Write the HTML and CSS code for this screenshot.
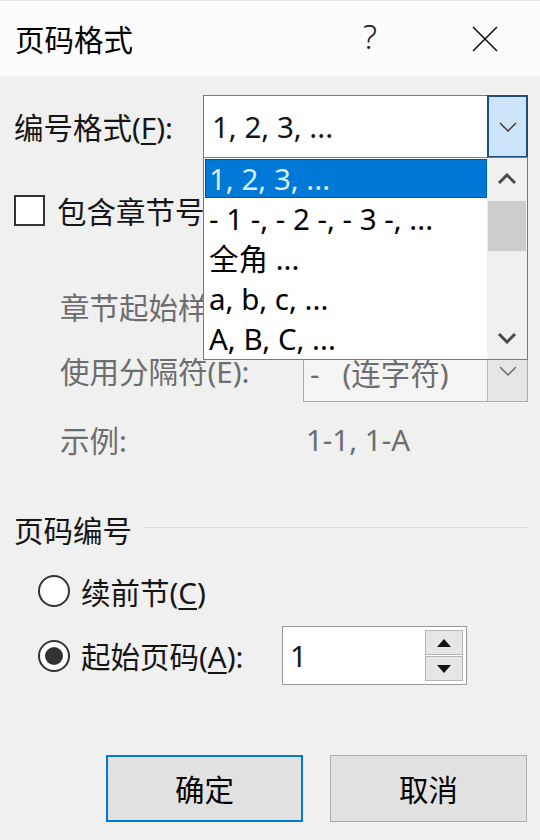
FILE: index.html
```html
<!DOCTYPE html>
<html lang="zh-CN">
<head>
    <meta charset="UTF-8">
    <title>页码格式</title>
    <link rel="stylesheet" href="styles.css">
</head>
<body>
<div class="dialog">
    <!-- TITLE BAR -->
    <div class="titlebar">
        <span class="title">页码格式</span>
        <span class="help">?</span>
        <span class="close">
            <svg width="26" height="26" viewBox="0 0 26 26"><path d="M1 1L25 25M25 1L1 25" stroke="#111" stroke-width="1.6" fill="none"/></svg>
        </span>
    </div>

    <div class="content">
        <!-- NUMBER FORMAT -->
        <div class="row fmt-row">
            <span class="fmt-label">编号格式(<u>F</u>):</span>
            <div class="combo">
                <span class="combo-text">1, 2, 3, ...</span>
                <span class="combo-btn">
                    <svg width="18" height="10" viewBox="0 0 18 10"><path d="M1 1L9 9L17 1" stroke="#333" stroke-width="1.4" fill="none"/></svg>
                </span>
                <div class="dropdown">
                    <ul class="options">
                        <li class="selected">1, 2, 3, ...</li>
                        <li>- 1 -, - 2 -, - 3 -, ...</li>
                        <li>全角 ...</li>
                        <li>a, b, c, ...</li>
                        <li>A, B, C, ...</li>
                    </ul>
                    <div class="scrollbar">
                        <span class="sb-arrow">
                            <svg width="20" height="12" viewBox="0 0 20 12"><path d="M2 10L10 2L18 10" stroke="#4a4a4a" stroke-width="3" fill="none"/></svg>
                        </span>
                        <span class="sb-track"><span class="sb-thumb"></span></span>
                        <span class="sb-arrow">
                            <svg width="20" height="12" viewBox="0 0 20 12"><path d="M2 2L10 10L18 2" stroke="#4a4a4a" stroke-width="3" fill="none"/></svg>
                        </span>
                    </div>
                </div>
            </div>
        </div>

        <!-- CHAPTER -->
        <div class="row check-row">
            <span class="checkbox"></span>
            <span class="clip-label check-label">包含章节号(<u>N</u>)</span>
        </div>
        <div class="row sub-row chapter-row">
            <span class="clip-label chapter-label disabled">章节起始样式(<u>P</u>):</span>
        </div>
        <div class="row sub-row sep-row">
            <span class="sub-label disabled">使用分隔符(E):</span>
            <div class="combo combo-disabled">
                <span class="combo-text">-&nbsp;&nbsp;&nbsp;(连字符)</span>
                <span class="combo-btn">
                    <svg width="18" height="10" viewBox="0 0 18 10"><path d="M1 1L9 9L17 1" stroke="#666" stroke-width="1.4" fill="none"/></svg>
                </span>
            </div>
        </div>
        <div class="row sub-row example-row">
            <span class="sub-label disabled">示例:</span>
            <span class="example-value disabled">1-1, 1-A</span>
        </div>

        <!-- PAGE NUMBERING -->
        <div class="row section-row">
            <span>页码编号</span>
        </div>
        <div class="row radio-row radio-first">
            <span class="radio"></span>
            <span>续前节(<u>C</u>)</span>
        </div>
        <div class="row radio-row radio-second">
            <span class="radio checked"></span>
            <span class="start-label">起始页码(<u>A</u>):</span>
            <div class="spin-input">
                <span class="spin-text">1</span>
                <span class="spin-btns">
                    <span class="spin-btn"><svg width="16" height="8" viewBox="0 0 16 8"><path d="M1 8L8 0L15 8Z" fill="#111"/></svg></span>
                    <span class="spin-btn"><svg width="16" height="8" viewBox="0 0 16 8"><path d="M1 0L8 8L15 0Z" fill="#111"/></svg></span>
                </span>
            </div>
        </div>

        <!-- BUTTONS -->
        <div class="row buttons">
            <span class="btn btn-default">确定</span>
            <span class="btn">取消</span>
        </div>
    </div>
</div>
</body>
</html>
```

FILE: styles.css
```css
html, body {
    margin: 0;
    padding: 0;
    width: 540px;
    height: 840px;
    overflow: hidden;
}

*, *:before, *:after {
    box-sizing: border-box;
}

body {
    background: #f0f0f0;
    font-family: 'Noto Sans', 'Noto Sans CJK SC', sans-serif;
    font-size: 29.5px;
    color: #151515;
}

u {
    text-decoration-thickness: 2px;
    text-underline-offset: 4px;
}

.dialog {
    width: 540px;
    height: 840px;
}

/* title bar */
.titlebar {
    height: 76px;
    background: #fcfcfc;
    border-top: 1px solid #e6e6e6;
    display: flex;
    align-items: center;
    padding-right: 10px;
}

.title {
    flex: 1;
    padding-left: 15px;
    color: #000;
}

.help {
    width: 50px;
    margin-right: 45px;
    text-align: center;
    color: #222;
    font-size: 33px;
    font-weight: 300;
    margin-top: -4px;
}

.close {
    width: 90px;
    display: flex;
    justify-content: center;
}

.close svg {
    display: block;
}

/* content */
.content {
    padding: 0 12px 0 14px;
}

.row {
    display: flex;
    align-items: center;
}

.fmt-row {
    margin-top: 19px;
    height: 63px;
}

.fmt-label {
    width: 189px;
}

.combo {
    position: relative;
    width: 325px;
    height: 63px;
    background: #fff;
    border: 1px solid #7a7a7a;
    display: flex;
    align-items: center;
}

.combo-text {
    flex: 1;
    padding-left: 8px;
    white-space: nowrap;
}

.combo-btn {
    width: 41px;
    height: 63px;
    margin: -1px -1px -1px 0;
    background: #cce4f7;
    border: 2px solid #1c4f7d;
    display: flex;
    align-items: center;
    justify-content: center;
}

.combo-btn svg {
    display: block;
}

/* open list */
.dropdown {
    position: absolute;
    left: -1px;
    top: 61px;
    width: 325px;
    height: 203px;
    z-index: 10;
    background: #fff;
    border: 1px solid #7a7a7a;
    display: flex;
}

.options {
    list-style: none;
    margin: 0;
    padding: 1px 0 0 1px;
    flex: 1;
}

.options li {
    height: 40px;
    line-height: 40px;
    padding-left: 4px;
    white-space: nowrap;
    color: #000;
}

.options li.selected {
    background: #0078d7;
    color: #d9efff;
    outline: 1px dotted #2a2a2a;
    outline-offset: -1px;
    height: 39px;
    margin-bottom: 1px;
}

.scrollbar {
    width: 40px;
    background: #f0f0f0;
    display: flex;
    flex-direction: column;
}

.sb-arrow {
    height: 42px;
    display: flex;
    align-items: center;
    justify-content: center;
}

.sb-track {
    flex: 1;
    padding: 1px 1px 0;
}

.sb-thumb {
    display: block;
    height: 50px;
    background: #cdcdcd;
}

/* chapter options */
.check-row {
    margin-top: 26px;
    height: 52px;
}

.checkbox {
    width: 31px;
    height: 31px;
    background: #fff;
    border: 2px solid #333;
    margin-right: 12px;
}

/* labels that run under the open list */
.clip-label {
    overflow: hidden;
    white-space: nowrap;
}

.check-label {
    width: 146px;
}

.chapter-label {
    width: 143px;
}

.sub-row {
    padding-left: 46px;
}

.sub-label {
    width: 243px;
    white-space: nowrap;
}

.disabled {
    color: #6d6d6d;
}

.chapter-row {
    margin-top: 40px;
    height: 60px;
}

.sep-row {
    margin-top: 3px;
    height: 63px;
}

.combo-disabled {
    width: 225px;
    background: #f4f4f4;
    border-color: #adadad;
    color: #6d6d6d;
}

.combo-disabled .combo-text {
    padding-left: 6px;
    padding-top: 4px;
}

.combo-disabled .combo-btn {
    width: 40px;
    margin: 0;
    height: 61px;
    border: none;
    border-left: 1px solid #b9b9b9;
    background: #e6e6e6;
}

.example-row {
    margin-top: 17px;
    height: 40px;
}

.example-value {
    padding-left: 3px;
}

/* page numbering */
.section-row {
    margin-top: 50px;
    height: 40px;
}

.section-row:after {
    content: "";
    flex: 1;
    height: 1px;
    margin: -3px 0 0 12px;
    background: #d9d9d9;
}

.radio-row {
    padding-left: 24px;
}

.radio {
    width: 32px;
    height: 32px;
    border-radius: 50%;
    border: 2px solid #333;
    background: #fff;
    margin-right: 11px;
    display: flex;
    align-items: center;
    justify-content: center;
}

.radio.checked:after {
    content: "";
    width: 18px;
    height: 18px;
    border-radius: 50%;
    background: #333;
}

.radio-first {
    margin-top: 22px;
    height: 40px;
}

.radio-second {
    margin-top: 15px;
    height: 59px;
}

.start-label {
    width: 201px;
}

.spin-input {
    width: 185px;
    height: 59px;
    background: #fff;
    border: 1px solid #9a9a9a;
    display: flex;
    align-items: center;
}

.spin-text {
    flex: 1;
    padding-left: 7px;
}

.spin-btns {
    display: flex;
    flex-direction: column;
    margin-right: 3px;
    gap: 1px;
}

.spin-btn {
    width: 38px;
    height: 25px;
    background: #e6e6e6;
    border: 1px solid #b4b4b4;
    display: flex;
    align-items: center;
    justify-content: center;
}

.spin-btn svg {
    display: block;
}

/* dialog buttons */
.buttons {
    margin-top: 70px;
    justify-content: flex-end;
    gap: 27px;
    padding-right: 1px;
}

.btn {
    width: 197px;
    height: 67px;
    background: #e1e1e1;
    border: 1px solid #adadad;
    display: flex;
    align-items: center;
    justify-content: center;
    color: #000;
}

.btn-default {
    border: 2px solid #0078d7;
}
```
